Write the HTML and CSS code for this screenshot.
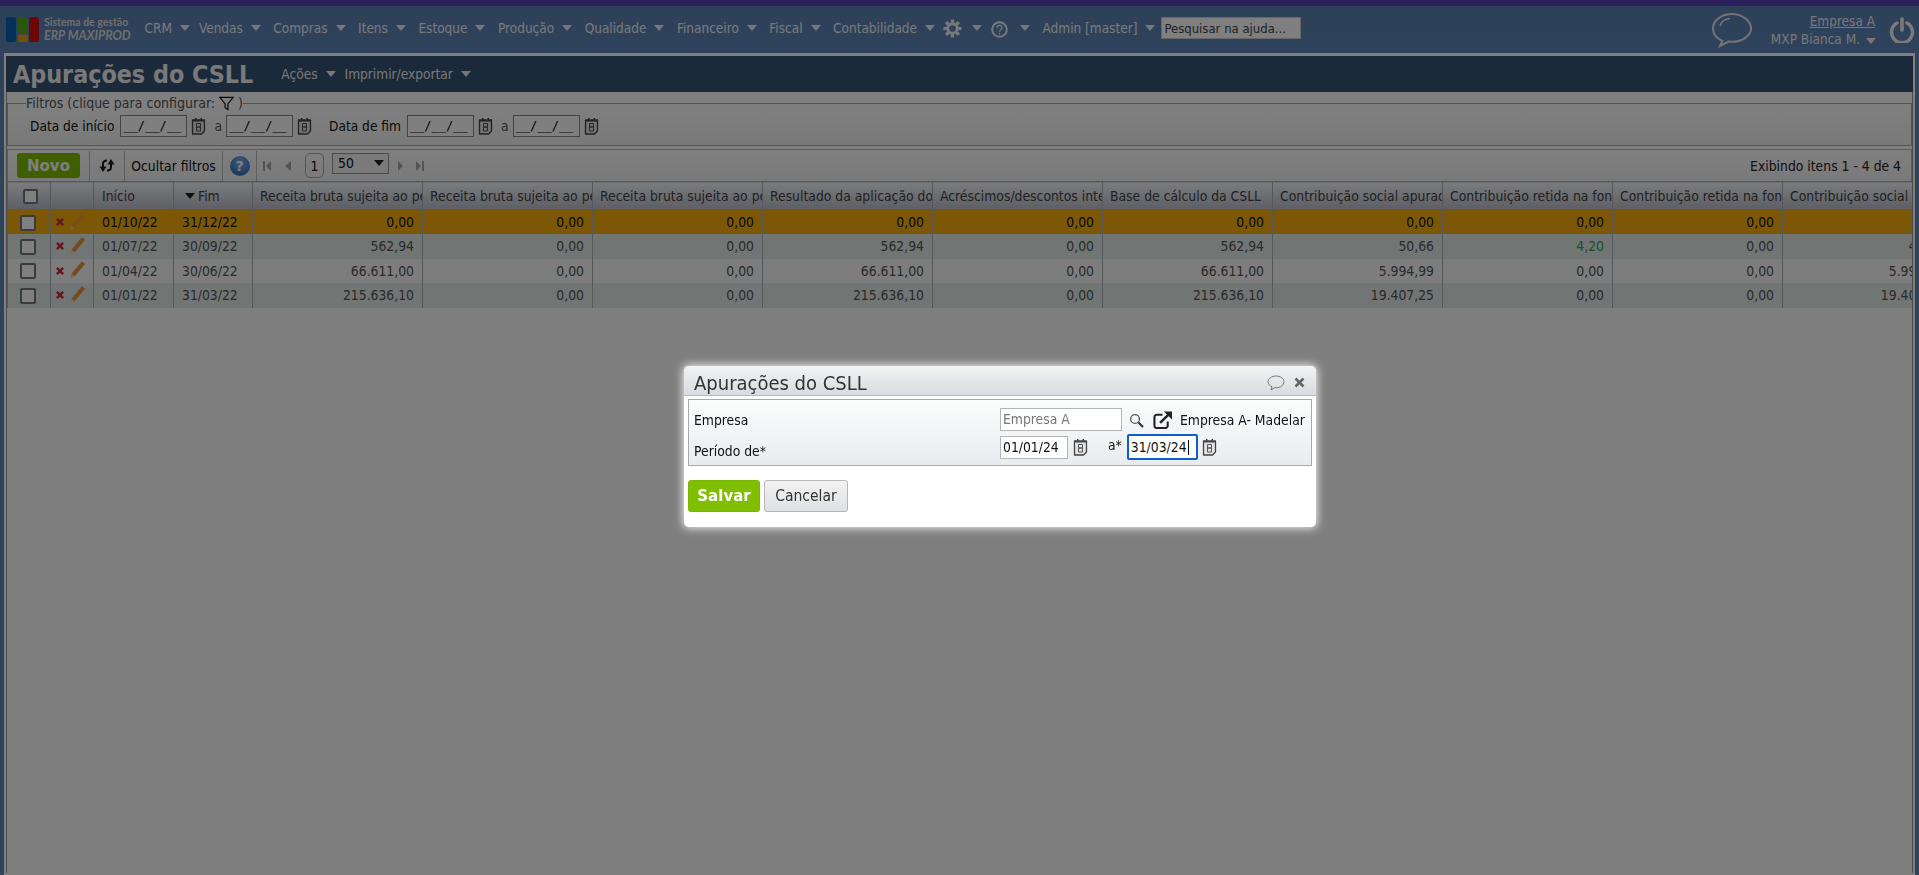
FILE: index.html
```html
<!DOCTYPE html>
<html lang="pt-BR">
<head>
<meta charset="utf-8">
<title>Apurações do CSLL</title>
<link rel="stylesheet" href="styles.css">
</head>
<body>
<div class="app">
  <header class="topbar">
    <div class="brand">
      <svg class="brand-mark" width="33" height="25" viewBox="0 0 33 25"><rect x="0" y="0" width="10" height="25" rx="2" fill="#0a62b0"/><rect x="12" y="0" width="10" height="16" rx="2" fill="#4fae14"/><rect x="12" y="17.500" width="10" height="7.500" rx="1.500" fill="#e3a10e"/><rect x="23" y="0" width="10" height="25" rx="2" fill="#d80e0e"/></svg>
      <div class="brand-text"><span class="brand-small">Sistema de gestão</span><span class="brand-big">ERP MAXIPROD</span></div>
    </div>
    <nav class="menu">
      <a class="mi mi-first">CRM<i class="caret"></i></a>
      <a class="mi">Vendas<i class="caret"></i></a>
      <a class="mi">Compras<i class="caret"></i></a>
      <a class="mi">Itens<i class="caret"></i></a>
      <a class="mi">Estoque<i class="caret"></i></a>
      <a class="mi">Produção<i class="caret"></i></a>
      <a class="mi">Qualidade<i class="caret"></i></a>
      <a class="mi">Financeiro<i class="caret"></i></a>
      <a class="mi">Fiscal<i class="caret"></i></a>
      <a class="mi mi-tight">Contabilidade<i class="caret"></i></a>
      <a class="mi mi-gear"><svg width="19" height="19" viewBox="0 0 20 20"><circle cx="10" cy="10" r="5" fill="none" stroke="#f4f4f4" stroke-width="3"/><path stroke="#f4f4f4" stroke-width="3.400" d="M10 0.500v3.500M10 16v3.500M0.500 10h3.500M16 10h3.500M3.300 3.300l2.500 2.500M14.200 14.200l2.500 2.500M16.700 3.300l-2.500 2.500M3.300 16.700l2.500-2.500"/></svg><i class="caret"></i></a>
      <a class="mi mi-help"><svg class="ic-help" width="17" height="17" viewBox="0 0 17 17"><circle cx="8.500" cy="8.500" r="7.300" fill="none" stroke="#f0f0f0" stroke-width="2"/><path fill="none" stroke="#f0f0f0" stroke-width="1.300" d="M6 6.800c0-3.200 5-3.200 5 0 0 2-2.500 2-2.500 4"/><path stroke="#f0f0f0" stroke-width="1.400" d="M8.500 11.800v1.500"/></svg><i class="caret"></i></a>
      <a class="mi mi-admin">Admin [master]<i class="caret"></i></a>
      <input class="help-search" placeholder="Pesquisar na ajuda...">
    </nav>
    <div class="top-right">
      <svg class="ic-chat" width="42" height="36" viewBox="0 0 42 36"><path fill="none" stroke="#e8e8e8" stroke-width="2" d="M21 2C10.500 2 2 8.500 2 16.500c0 5.500 4 10 9.500 12.300L9 34l8.500-4.500c1.200.2 2.300.3 3.500.3 10.500 0 19-6.200 19-13.300S31.500 2 21 2z"/><path fill="none" stroke="#e8e8e8" stroke-width="1.500" d="M9 14c1-4 5-7 10-7.500"/></svg>
      <div class="user">
        <a class="company">Empresa A</a>
        <span class="user-name">MXP Bianca M.<i class="caret"></i></span>
      </div>
      <svg class="ic-power" width="26" height="26" viewBox="0 0 26 26"><path fill="none" stroke="#f4f4f4" stroke-width="3.400" stroke-linecap="round" d="M8 6a10.500 10.500 0 1 0 10 0"/><path stroke="#f4f4f4" stroke-width="3.600" stroke-linecap="round" d="M13 2v11"/></svg>
    </div>
  </header>

  <main class="frame">
    <div class="titlebar">
      <h1>Apurações do CSLL</h1>
      <a class="tmi">Ações<i class="caret"></i></a>
      <a class="tmi">Imprimir/exportar<i class="caret"></i></a>
    </div>

    <fieldset class="filters">
      <legend>Filtros (clique para configurar: <svg class="ic-funnel" width="15" height="15" viewBox="0 0 16 15"><path fill="none" stroke="#111" stroke-width="1.300" d="M1 1h14L9.500 8v6L6.500 12V8z"/></svg> )</legend>
      <div class="filter-row">
        <label class="flabel">Data de início</label>
        <input class="fdate" value="__/__/__"><svg class="cal" width="15" height="18" viewBox="0 0 15 18"><use href="#calendar"/></svg>
        <span class="fa">a</span>
        <input class="fdate" value="__/__/__"><svg class="cal" width="15" height="18" viewBox="0 0 15 18"><use href="#calendar"/></svg>
        <label class="flabel flabel2">Data de fim</label>
        <input class="fdate" value="__/__/__"><svg class="cal" width="15" height="18" viewBox="0 0 15 18"><use href="#calendar"/></svg>
        <span class="fa">a</span>
        <input class="fdate" value="__/__/__"><svg class="cal" width="15" height="18" viewBox="0 0 15 18"><use href="#calendar"/></svg>
      </div>
    </fieldset>

    <div class="toolbar">
      <button class="btn-new">Novo</button>
      <span class="tb-cell tb-refresh"><svg width="16" height="13" viewBox="0 0 16 13"><path fill="none" stroke="#1c1c1c" stroke-width="2" d="M4 11V5c0-2.500 1.500-3.500 4-3.500M12 2v6c0 2.500-1.500 3.500-4 3.500"/><path fill="#1c1c1c" d="M0.500 7.500h7L4 13zM8.500 5.500h7L12 0z"/></svg></span>
      <span class="tb-cell tb-text">Ocultar filtros</span>
      <span class="tb-cell tb-help"><span class="help-ball">?</span></span>
      <div class="pager">
        <svg width="9" height="12" viewBox="0 0 9 12"><path fill="#a8a8a8" d="M0 1h2v10H0zM8 1v10L3 6z"/></svg>
        <svg class="pg-prev" width="8" height="12" viewBox="0 0 8 12"><path fill="#a8a8a8" d="M7 1v10L1 6z"/></svg>
        <span class="page-no">1</span>
        <span class="page-size">50<i class="caret caret-dark"></i></span>
        <svg class="pg-next" width="7" height="12" viewBox="0 0 7 12"><path fill="#a8a8a8" d="M1 1v10l5-5z"/></svg>
        <svg class="pg-last" width="8" height="12" viewBox="0 0 8 12"><path fill="#a8a8a8" d="M0 1v10l5-5zM6 1h2v10H6z"/></svg>
      </div>
      <span class="tb-count">Exibindo itens 1 - 4 de 4</span>
    </div>

    <div class="grid-wrap">
      <table class="grid">
        <colgroup><col class="c-chk"><col class="c-act"><col class="c-d1"><col class="c-d2"><col class="c-n"><col class="c-n"><col class="c-n"><col class="c-n"><col class="c-n"><col class="c-n"><col class="c-n"><col class="c-n"><col class="c-n"><col class="c-n"></colgroup>
        <thead>
          <tr>
            <th class="center"><span class="chk chk-h"></span></th><th></th><th>Início</th><th><i class="caret caret-dark caret-sort"></i>Fim</th>
            <th class="hn">Receita bruta sujeita ao percentual</th><th class="hn">Receita bruta sujeita ao percentual</th><th class="hn">Receita bruta sujeita ao percentual</th><th class="hn">Resultado da aplicação dos percentuais</th><th class="hn">Acréscimos/descontos internos</th><th class="hn">Base de cálculo da CSLL</th><th class="hn">Contribuição social apurada</th><th class="hn">Contribuição retida na fonte</th><th class="hn">Contribuição retida na fonte</th><th class="hn">Contribuição social a pagar</th>
          </tr>
        </thead>
        <tbody>
          <tr class="sel"><td class="center"><span class="chk"></span></td><td class="act"><svg class="x" width="8" height="8" viewBox="0 0 9 9"><use href="#xmark"/></svg><svg class="pen pen-sel" width="17" height="19" viewBox="0 0 17 19"><use href="#pencil"/></svg></td><td>01/10/22</td><td>31/12/22</td><td class="r">0,00</td><td class="r">0,00</td><td class="r">0,00</td><td class="r">0,00</td><td class="r">0,00</td><td class="r">0,00</td><td class="r">0,00</td><td class="r">0,00</td><td class="r">0,00</td><td class="r"></td></tr>
          <tr class="odd"><td class="center"><span class="chk"></span></td><td class="act"><svg class="x" width="8" height="8" viewBox="0 0 9 9"><use href="#xmark"/></svg><svg class="pen" width="17" height="19" viewBox="0 0 17 19"><use href="#pencil"/></svg></td><td>01/07/22</td><td>30/09/22</td><td class="r">562,94</td><td class="r">0,00</td><td class="r">0,00</td><td class="r">562,94</td><td class="r">0,00</td><td class="r">562,94</td><td class="r">50,66</td><td class="r green">4,20</td><td class="r">0,00</td><td class="r">46,46</td></tr>
          <tr class="even"><td class="center"><span class="chk"></span></td><td class="act"><svg class="x" width="8" height="8" viewBox="0 0 9 9"><use href="#xmark"/></svg><svg class="pen" width="17" height="19" viewBox="0 0 17 19"><use href="#pencil"/></svg></td><td>01/04/22</td><td>30/06/22</td><td class="r">66.611,00</td><td class="r">0,00</td><td class="r">0,00</td><td class="r">66.611,00</td><td class="r">0,00</td><td class="r">66.611,00</td><td class="r">5.994,99</td><td class="r">0,00</td><td class="r">0,00</td><td class="r">5.994,99</td></tr>
          <tr class="odd"><td class="center"><span class="chk"></span></td><td class="act"><svg class="x" width="8" height="8" viewBox="0 0 9 9"><use href="#xmark"/></svg><svg class="pen" width="17" height="19" viewBox="0 0 17 19"><use href="#pencil"/></svg></td><td>01/01/22</td><td>31/03/22</td><td class="r">215.636,10</td><td class="r">0,00</td><td class="r">0,00</td><td class="r">215.636,10</td><td class="r">0,00</td><td class="r">215.636,10</td><td class="r">19.407,25</td><td class="r">0,00</td><td class="r">0,00</td><td class="r">19.407,25</td></tr>
        </tbody>
      </table>
    </div>
  </main>
</div>

<div class="overlay"></div>

<section class="dialog">
  <div class="dlg-head">
    <span class="dlg-title">Apurações do CSLL</span>
    <svg class="dlg-chat" width="18" height="16" viewBox="0 0 18 16"><path fill="none" stroke="#777" stroke-width="1" d="M9 1C4.600 1 1 3.600 1 6.800c0 2.200 1.700 4.100 4.100 5L4 15l3.800-2.300c.4 0 .8.100 1.200.100 4.400 0 8-2.700 8-6S13.400 1 9 1z"/></svg>
    <svg class="dlg-x" width="11" height="11" viewBox="0 0 11 11"><path stroke="#666" stroke-width="2.600" d="M1.500 1.500l8 8M9.500 1.500l-8 8"/></svg>
  </div>
  <div class="dlg-box">
    <div class="dlg-row">
      <label class="dlg-label">Empresa</label>
      <input class="dlg-input dlg-company" value="Empresa A">
      <svg class="ic-search" width="15" height="15" viewBox="0 0 15 15"><circle cx="6" cy="6" r="4.400" fill="none" stroke="#555" stroke-width="1.300"/><path stroke="#333" stroke-width="2.200" d="M9.500 9.500l4.500 4.500"/></svg>
      <svg class="ic-ext" width="19" height="18" viewBox="0 0 20 19"><path fill="none" stroke="#222" stroke-width="2.200" d="M10 4H4a2.500 2.500 0 0 0-2.500 2.500v9A2.500 2.500 0 0 0 4 18h9a2.500 2.500 0 0 0 2.500-2.500V11"/><path stroke="#222" stroke-width="2.600" d="M7.500 12.500L16 4"/><path fill="#222" d="M11.500 0.500H20V9z"/></svg>
      <span class="dlg-desc">Empresa A- Madelar</span>
    </div>
    <div class="dlg-row dlg-row2">
      <label class="dlg-label dlg-label2">Período de*</label>
      <input class="dlg-input dlg-date" value="01/01/24">
      <svg class="cal cal-d" width="15" height="18" viewBox="0 0 15 18"><use href="#calendar"/></svg>
      <span class="dlg-a">a*</span>
      <span class="dlg-focus">31/03/24<i class="text-cursor"></i></span>
      <svg class="cal cal-d2" width="15" height="18" viewBox="0 0 15 18"><use href="#calendar"/></svg>
    </div>
  </div>
  <div class="dlg-actions">
    <button class="btn-save">Salvar</button>
    <button class="btn-cancel">Cancelar</button>
  </div>
</section>

<svg class="defs" width="0" height="0">
  <defs>
    <g id="calendar"><path fill="#e4e4e4" stroke="#444" stroke-width="1.300" stroke-linejoin="round" d="M1.500 3h12v11l-3 3h-9z"/><path fill="#444" d="M1.500 3h12v1.500h-12zM4 1h1.500v3H4zM9.500 1H11v3H9.500z"/><path fill="none" stroke="#555" stroke-width="1" d="M5.500 6.500h4v3.500h-4zM5.500 10h4v4h-4z"/></g>
    <g id="xmark"><path stroke="#c8303c" stroke-width="2.800" d="M1 1l7 7M8 1L1 8"/></g>
    <g id="pencil"><path stroke="#e8963c" stroke-width="4.200" d="M14.500 1.500L4 14"/><path fill="#f3d9a8" d="M2.300 12.700l3 2.500L1 18z"/></g>
  </defs>
</svg>
</body>
</html>
```
FILE: styles.css
```css
* { box-sizing: border-box; }
html, body { margin: 0; padding: 0; height: 100%; overflow: hidden; }
body { font-family: "DejaVu Sans Condensed", "DejaVu Sans", sans-serif; font-size: 13.8px; color: #111; background: #5f86b8; }
.app { height: 875px; display: flex; flex-direction: column; border-top: 6px solid #5640b8; }
.topbar { height: 47px; flex: none; display: flex; align-items: center; background: linear-gradient(#5b81b1, #5f86b9); padding-left: 6px; font-size: 13.5px; }
.brand { display: flex; align-items: center; width: 138.5px; flex: none; margin-bottom: 1px; }
.brand-mark { flex: none; }
.brand-text { display: flex; flex-direction: column; margin-left: 5px; color: #dcdcdc; font-family: Lato, sans-serif; font-weight: bold; }
.brand-small { font-size: 10.500px; line-height: 13px; }
.brand-big { font-size: 12.400px; line-height: 14px; font-style: italic; }
.menu { display: flex; align-items: center; margin-bottom: 3px; }
.mi { display: flex; align-items: center; color: #f2f2f2; white-space: nowrap; margin-right: 12.500px; }
.mi-first { margin-right: 9px; }
.mi-tight { margin-right: 8px; }
.mi-gear { margin-right: 9px; }
.mi-gear .caret { margin-left: 10px; }
.mi-help .caret { margin-left: 12px; }
.mi-admin { margin-right: 6px; }
.caret { display: inline-block; flex: none; width: 0; height: 0; border-left: 5px solid transparent; border-right: 5px solid transparent; border-top: 6px solid #eee; margin-left: 8px; }
.caret-dark { border-top-color: #222; }
.ic-help { margin-top: 3px; }
.help-search { width: 140px; height: 22px; border: 1px solid #ccc; background: #fff; font: inherit; font-size: 13px; padding: 0 2px; }
.help-search::placeholder { color: #444; opacity: 1; }
.top-right { margin-left: auto; display: flex; align-items: center; }
.user { display: flex; flex-direction: column; align-items: flex-end; margin-left: 18px; color: #eee; line-height: 18px; font-size: 13.5px; }
.company { text-decoration: underline; margin-right: 1px; }
.user-name .caret { margin-left: 6px; }
.ic-power { margin: 0 4px 0 13px; }
.frame { flex: 1; min-height: 0; margin: 0 4px; border: 2px solid #fff; border-top-width: 3px; padding: 0 1px; background: #fff; box-shadow: inset 1px 0 0 #999, inset -1px 0 0 #999; display: flex; flex-direction: column; }
.titlebar { height: 36px; flex: none; margin: 0 -1px 0 -1px; background: #345474; display: flex; align-items: center; color: #eee; padding-left: 7px; font-size: 13.6px; }
.titlebar h1 { margin: 0 28px 0 0; font-size: 24.800px; font-family: "DejaVu Sans Condensed", "DejaVu Sans", sans-serif; font-weight: bold; color: #f2f2f2; }
.tmi { margin-right: 9px; display: flex; align-items: center; }
.filters { flex: none; margin: 4px 0 3px; padding: 0 0 0 22px; height: 50px; border: 1px solid #a8a8a8; min-width: 0; background: linear-gradient(#fff, #f4f4f4); }
.filters legend { padding: 0; margin-left: -4px; color: #555; height: 15px; line-height: 15px; font-size: 14px; }
.ic-funnel { vertical-align: -3px; }
.filter-row { display: flex; align-items: center; color: #111; height: 26px; margin-top: 2px; }
.flabel { font-size: 13.600px; }
.fdate { width: 67px; height: 22px; border: 1px solid #888; font: 12px "DejaVu Sans Mono", monospace; padding: 0 2px; margin-left: 6px; background: #fff; }
.cal { flex: none; margin-left: 4px; }
.fa { margin-left: 8px; color: #555; }
.fa + .fdate { margin-left: 4px; }
.flabel2 { margin-left: 17px; }
.toolbar { height: 32px; flex: none; border: 1px solid #bbb; border-bottom: 0; display: flex; align-items: center; padding-left: 9px; background: linear-gradient(#fff, #f4f4f4); }
.btn-new { width: 63px; height: 25px; border: 0; border-radius: 3px; background: #7fbf00; color: #fff; font: bold 15px "DejaVu Sans", sans-serif; padding: 0; margin-right: 9px; }
.tb-cell { display: flex; align-items: center; justify-content: center; height: 30px; border-left: 1px solid #bbb; }
.tb-refresh { width: 35px; }
.tb-text { width: 98px; color: #111; }
.tb-help { width: 35px; border-right: 1px solid #bbb; }
.help-ball { width: 20px; height: 20px; border-radius: 50%; background: radial-gradient(circle at 50% 30%, #7db3f0, #1f5fb0); color: #fff; font: bold 14px/20px "DejaVu Sans", sans-serif; text-align: center; }
.pager { display: flex; align-items: center; margin-left: 6px; }
.pg-prev { margin-left: 12px; }
.page-no { width: 19px; height: 25px; margin-left: 13px; border: 1px solid #aaa; border-radius: 5px; display: flex; align-items: center; justify-content: center; }
.page-size { width: 57px; height: 21px; margin: 0 0 5px 8px; border: 1px solid #999; display: flex; align-items: center; justify-content: space-between; padding: 0 4px 0 5px; background: #f4f4f4; }
.pg-next { margin-left: 8px; }
.pg-last { margin-left: 12px; }
.tb-count { margin-left: auto; margin-right: 10px; color: #222; }
.grid-wrap { overflow: hidden; flex: none; }
.grid { table-layout: fixed; border-collapse: collapse; width: 1903px; }
.c-chk { width: 43px; } .c-act { width: 43px; } .c-d1 { width: 80px; } .c-d2 { width: 79px; } .c-n { width: 170px; }
.grid th { height: 28px; padding: 0 0 0 8px; text-align: left; font-weight: normal; color: #444; white-space: nowrap; overflow: hidden; background: linear-gradient(#f7f8fa, #b9bdc9); border: 1px solid #aab0b8; }
.grid th.hn { padding-left: 7px; }
.grid td { height: 24.500px; padding: 0 8px; white-space: nowrap; overflow: hidden; border-right: 1px solid #aab0b8; border-left: 1px solid #aab0b8; color: #555; }
.grid td.r { text-align: right; }
.grid .center { text-align: center; padding: 0; }
.grid td.center { padding-right: 2px; }
.grid td.act { padding: 0 0 0 5px; }
.sel td { background: #f7ae0d; color: #000; }
.sel td.r, .sel td { color: #111; }
.odd td { background: #e3ebe8; }
.even td { background: #fafafa; }
.grid td.green { color: #3a9f5a; }
.chk { display: inline-block; width: 16px; height: 16px; border: 2px solid #777; border-radius: 2px; background: #fff; vertical-align: middle; }
.chk-h { width: 15px; height: 15px; margin-left: 3px; }
.x { vertical-align: middle; }
.pen { vertical-align: middle; margin-left: 5px; }
.pen-sel { opacity: .55; }
.caret-sort { margin: 0 3px 0 3px; vertical-align: 2px; }
.overlay { position: fixed; inset: 0; background: rgba(0,0,0,.5); }
.dialog { position: fixed; left: 684px; top: 366px; width: 632px; height: 161px; background: #fff; border-radius: 5px; box-shadow: 0 0 8px 1px rgba(255,255,255,.9); }
.dlg-head { height: 30px; display: flex; align-items: center; padding: 4px 11px 0 10px; background: linear-gradient(#f3f3f3, #d8dbe0); border-radius: 5px 5px 0 0; border-bottom: 1px solid #b4b8c0; }
.dlg-title { font-size: 20px; color: #333; flex: 1; }
.dlg-x { margin-left: 9px; }
.dlg-box { margin: 3px 4px 0 4px; height: 67px; border: 1px solid #a8a8a8; background: linear-gradient(#fbfcfc, #e9ecef); padding: 8px 0 0 5px; }
.dlg-row { display: flex; align-items: center; height: 24px; }
.dlg-row2 { margin-top: 2px; height: 26px; }
.dlg-label { width: 306px; flex: none; color: #111; }
.dlg-label2 { position: relative; top: 4px; }
.dlg-input { height: 23px; border: 1px solid #b5b5b5; font: inherit; padding: 0 2px; background: #fff; }
.dlg-company { width: 122px; color: #777; margin-top: -2px; }
.ic-search { margin-left: 7px; }
.ic-ext { margin-left: 9px; }
.dlg-desc { margin-left: 8px; color: #111; white-space: nowrap; }
.dlg-date { width: 68px; color: #111; }
.cal-d { margin-left: 5px; }
.dlg-a { margin-left: 20px; position: relative; top: -2px; }
.dlg-focus { display: flex; align-items: center; width: 71px; height: 26px; margin-left: 5px; padding-left: 2px; border: 2px solid #0b5fd0; border-radius: 2px; background: #fff; }
.text-cursor { width: 1px; height: 15px; background: #000; margin-left: 1px; }
.cal-d2 { margin-left: 4px; }
.dlg-actions { display: flex; margin: 14px 0 0 4px; gap: 4px; }
.btn-save { width: 72px; height: 32px; border: 1px solid #7ab800; border-radius: 3px; background: #7fbf00; color: #fff; font: bold 15px "DejaVu Sans", sans-serif; padding: 0; }
.btn-cancel { width: 84px; height: 32px; border: 1px solid #b5b5b5; border-radius: 3px; background: linear-gradient(#f2f2f2, #dfe1e5); color: #333; font: 15.500px "DejaVu Sans Condensed", "DejaVu Sans", sans-serif; padding: 0; }
.defs { position: absolute; }
```
